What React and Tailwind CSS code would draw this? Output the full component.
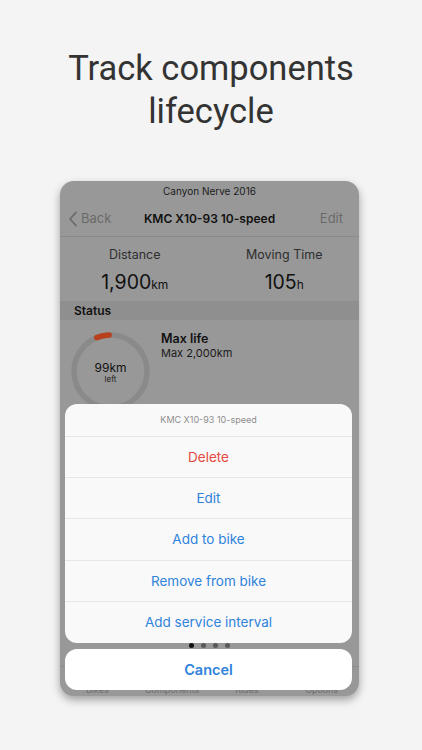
import React from "react";

export default function App() {
  const actions = [
    { t: "Delete", c: "text-[#e5483f]" },
    { t: "Edit", c: "text-[#2f83dc]" },
    { t: "Add to bike", c: "text-[#2f83dc]" },
    { t: "Remove from bike", c: "text-[#2f83dc]" },
    { t: "Add service interval", c: "text-[#2f83dc]" },
  ];
  const r = 36.5;
  const circ = 2 * Math.PI * r;
  return (
    <div className="w-[422px] h-[750px] bg-[#f4f4f4] overflow-hidden" style={{ fontFamily: "Inter, 'Liberation Sans', sans-serif" }}>
      <h1 className="pt-[47px] text-center text-[34.5px] leading-[43px] text-[#333333] font-normal" style={{ fontFamily: "Roboto, 'Liberation Sans', sans-serif" }}>
        Track components
        <br />
        lifecycle
      </h1>

      <div className="mt-[48px] ml-[60px] w-[299px] h-[515px] rounded-[14px] bg-[#989898] relative overflow-hidden shadow-[0_4px_8px_rgba(0,0,0,0.35)] flex flex-col">
        <div className="h-[21px] flex items-center justify-center text-[10px] text-[#1c1c1c]">Canyon Nerve 2016</div>
        <div className="h-[35px] flex items-center px-[8px] border-b border-[#8a8a8a] relative">
          <div className="flex items-center text-[#6a6a6a] text-[13px]">
            <svg width="10" height="16" viewBox="0 0 10 16" className="mr-[3px]">
              <path d="M8 1.5 L2 8 L8 14.5" fill="none" stroke="#6a6a6a" strokeWidth="1.8" strokeLinecap="round" strokeLinejoin="round" />
            </svg>
            Back
          </div>
          <div className="absolute inset-x-0 text-center text-[12px] font-semibold text-[#111] pointer-events-none">KMC X10-93 10-speed</div>
          <div className="ml-auto pr-[8px] text-[13px] text-[#6a6a6a]">Edit</div>
        </div>
        <div className="h-[64px] flex">
          <div className="flex-1 flex flex-col items-center pt-[10px]">
            <div className="text-[12.5px] text-[#2e2e2e] leading-[16px]">Distance</div>
            <div className="mt-[6px] text-[#111] leading-[26px]"><span className="text-[19.5px]">1,900</span><span className="text-[12px]">km</span></div>
          </div>
          <div className="flex-1 flex flex-col items-center pt-[10px]">
            <div className="text-[12.5px] text-[#2e2e2e] leading-[16px]">Moving Time</div>
            <div className="mt-[6px] text-[#111] leading-[26px]"><span className="text-[19.5px]">105</span><span className="text-[12px]">h</span></div>
          </div>
        </div>
        <div className="h-[19px] bg-[#8f8f8f] flex items-center px-[14px] text-[12px] font-semibold text-[#111]">Status</div>
        <div className="flex pl-[11px]">
          <div className="relative w-[79px] h-[79px] mt-[12px]">
            <svg width="79" height="79" viewBox="0 0 79 79">
              <circle cx="39.5" cy="39.5" r={r} fill="none" stroke="#8a8a8a" strokeWidth="5.5" />
              <circle
                cx="39.5"
                cy="39.5"
                r={r}
                fill="none"
                stroke="#b8401d"
                strokeWidth="5.5"
                strokeLinecap="round"
                strokeDasharray={`${circ * 0.055} ${circ}`}
                transform="rotate(-112 39.5 39.5)"
              />
            </svg>
            <div className="absolute inset-0 flex flex-col items-center justify-center pt-[2px]">
              <div className="text-[12px] leading-[13px] text-[#111]">99km</div>
              <div className="text-[8px] leading-[11px] text-[#222]">left</div>
            </div>
          </div>
          <div className="ml-[11px] pt-[11px]">
            <div className="text-[12.5px] font-semibold text-[#111] leading-[16px]">Max life</div>
            <div className="text-[11px] text-[#1a1a1a] leading-[13px]">Max 2,000km</div>
          </div>
        </div>
        <div className="mt-auto h-[30px] border-t border-[#8c8c8c] flex justify-around items-end text-[9px] text-[#6e6e6e]">
          <span className="w-[74px] text-center">Bikes</span>
          <span className="w-[74px] text-center">Components</span>
          <span className="w-[74px] text-center">Rides</span>
          <span className="w-[74px] text-center">Options</span>
        </div>

        <div className="absolute left-[5px] top-[223px] w-[287px] h-[239px] rounded-[12px] bg-[#f9f9f9] overflow-hidden flex flex-col">
          <div className="h-[33px] flex items-center justify-center text-[9px] text-[#8e8e8e] border-b border-[#e6e6e6]">KMC X10-93 10-speed</div>
          {actions.map((a, i) => (
            <div key={a.t} className={`h-[41.2px] flex items-center justify-center text-[13.5px] ${a.c} ${i < actions.length - 1 ? "border-b border-[#e6e6e6]" : ""}`}>
              {a.t}
            </div>
          ))}
        </div>
        <div className="absolute left-0 right-0 top-[462px] flex justify-center gap-[7px]">
          <span className="w-[5px] h-[5px] rounded-full bg-[#111]" />
          <span className="w-[5px] h-[5px] rounded-full bg-[#5a5a5a]" />
          <span className="w-[5px] h-[5px] rounded-full bg-[#5a5a5a]" />
          <span className="w-[5px] h-[5px] rounded-full bg-[#5a5a5a]" />
        </div>
        <div className="absolute left-[5px] top-[468px] w-[287px] h-[41px] rounded-[12px] bg-white flex items-center justify-center text-[14.5px] font-semibold text-[#2f83dc]">
          Cancel
        </div>
      </div>
    </div>
  );
}
